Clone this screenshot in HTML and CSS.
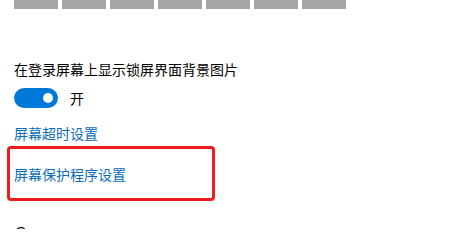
FILE: index.html
```html
<!DOCTYPE html>
<html lang="zh-CN">
<head>
<meta charset="utf-8">
<link rel="stylesheet" href="styles.css">
</head>
<body>
<div class="page">
  <div class="swatches">
    <span class="swatch"></span><span class="swatch"></span><span class="swatch"></span><span class="swatch"></span><span class="swatch"></span><span class="swatch"></span><span class="swatch"></span>
  </div>
  <div class="label">在登录屏幕上显示锁屏界面背景图片</div>
  <div class="toggle-row">
    <span class="toggle"><span class="knob"></span></span>
    <span class="toggle-text">开</span>
  </div>
  <a class="link first">屏幕超时设置</a>
  <div class="highlight">
    <a class="link">屏幕保护程序设置</a>
  </div>
  <div class="more">
    <svg width="12" height="12" viewBox="0 0 12 12"><path d="M1.5 6 A4.5 4.5 0 0 1 10.5 6" fill="none" stroke="#111" stroke-width="1.3"/></svg>
  </div>
</div>
</body>
</html>
```
FILE: styles.css
```css
html, body {
  margin: 0;
  padding: 0;
  background: #ffffff;
  overflow: hidden;
}
.page {
  width: 470px;
  height: 229px;
  padding-left: 14px;
  box-sizing: border-box;
  font-family: "Noto Sans CJK SC", "Noto Sans", sans-serif;
  font-size: 14px;
  line-height: 20px;
  color: #000;
}
.swatches {
  display: flex;
  gap: 4px;
  height: 9px;
}
.swatch {
  width: 44px;
  height: 9px;
  background: #a5a5a5;
}
.label {
  margin-top: 50px;
}
.toggle-row {
  display: flex;
  align-items: center;
  margin-top: 9px;
  height: 20px;
}
.toggle {
  width: 44px;
  height: 20px;
  border-radius: 10px;
  background: #0078d7;
  display: flex;
  align-items: center;
  justify-content: flex-end;
  padding-right: 5px;
  box-sizing: border-box;
}
.knob {
  width: 10px;
  height: 10px;
  border-radius: 50%;
  background: #fff;
}
.toggle-text {
  margin-left: 12px;
}
.link {
  display: block;
  color: #0a6cbd;
  text-decoration: none;
}
.link.first {
  margin-top: 15px;
}
.highlight {
  margin-top: 3px;
  margin-left: -7px;
  width: 208px;
  height: 55px;
  box-sizing: border-box;
  border: 3px solid #ee1c1c;
  border-radius: 4px;
  padding: 15px 4px 0;
}
.more {
  margin-top: 25px;
  height: 12px;
}
.more svg {
  display: block;
  margin-left: 1px;
}
```
